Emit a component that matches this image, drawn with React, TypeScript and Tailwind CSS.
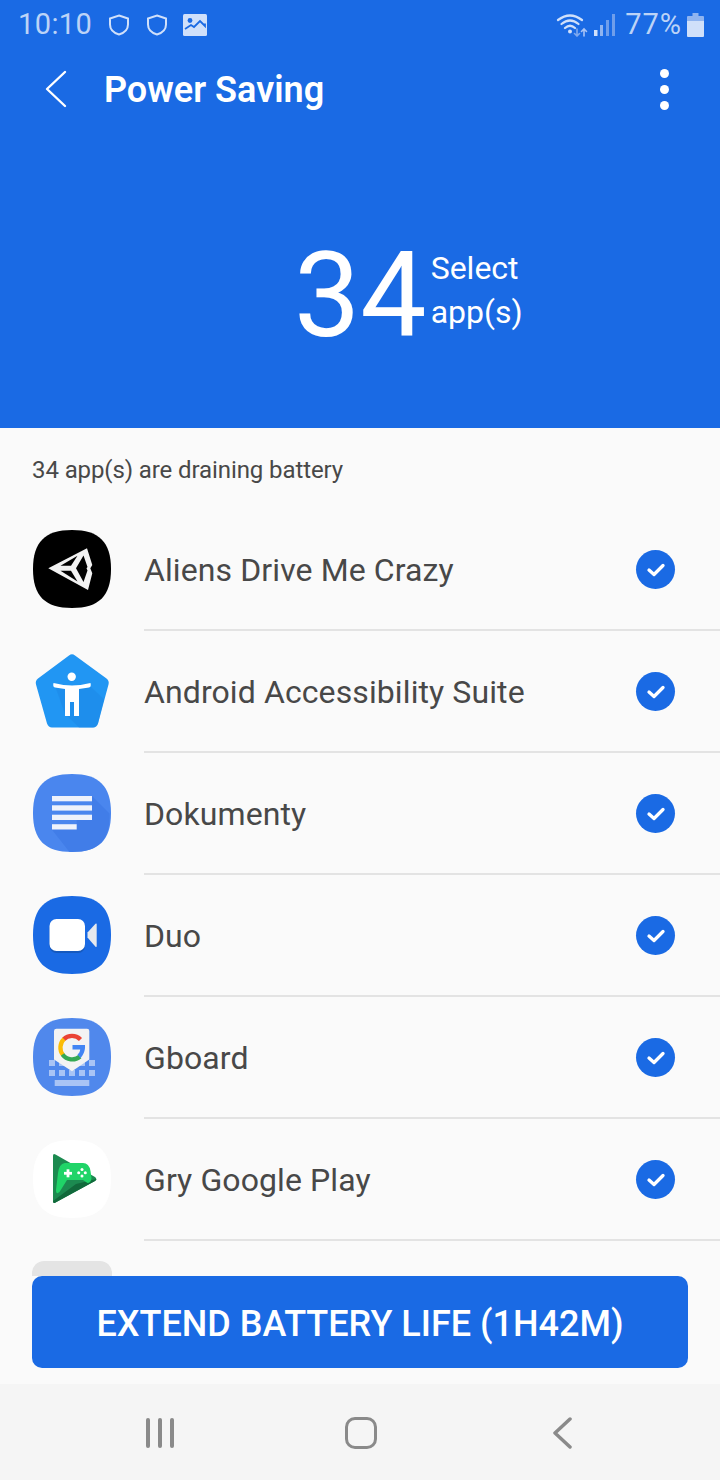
import { ReactNode } from 'react';

const SQUIRCLE = 'M39 0C66 0 78 12 78 39C78 66 66 78 39 78C12 78 0 66 0 39C0 12 12 0 39 0Z';

function Squircle({ fill, children }: { fill: string; children?: ReactNode }) {
  return (
    <svg width="78" height="78" viewBox="0 0 78 78">
      <path d={SQUIRCLE} fill={fill} />
      {children}
    </svg>
  );
}

function UnityIcon() {
  return (
    <Squircle fill="#000">
      <path d="M15.300 38.300L54 18.300L59.300 35L57.300 38.300L59.300 43.300L55 60L15.300 38.300Z" fill="#f2f2f2" />
      <g fill="#000">
        <path d="M27.500 35.800L44.500 25.800L38 35.800Z" />
        <path d="M27.500 40.800H38L44.500 51.500Z" />
        <path d="M43 38.300L50.500 25.500L54.500 37L53.500 38.300L54.500 40.500L50.500 52Z" />
      </g>
    </Squircle>
  );
}

function AccessibilityIcon() {
  return (
    <svg width="78" height="78" viewBox="0 0 78 78">
      <path d="M36 3.500Q39 1.200 42 3.500L73.500 26.500Q76.500 29 75.500 32.500L65 71.500Q63.500 75.500 60 75.500H19Q15.500 75.500 14 71.500L3 32.500Q2 29 5 26.500Z" fill="#2196f3" />
      <path d="M22 34H57L71 47L65 71.500Q63.500 75.500 60 75.500H46L32 62Z" fill="#1e88e5" opacity="0.55" />
      <circle cx="38.700" cy="24.700" r="4.200" fill="#fff" />
      <path d="M20.500 31Q19.500 35 22 35.500L32 37V64H37V50H41V64H46V37L56 35.500Q58.500 35 57.500 31Q47 33.500 39 33.500Q31 33.500 20.500 31Z" fill="#fff" />
    </svg>
  );
}

function DocsIcon() {
  return (
    <Squircle fill="#4a86ee">
      <path d="M59 22L76.500 39.500C77 66 66 78 39 78H36.500L19 55.700V50H43.700V46H59Z" fill="#3f7ae6" opacity="0.8" />
      <g fill="#eef2fb">
        <rect x="19" y="22" width="40" height="5.300" />
        <rect x="19" y="31.300" width="40" height="5.300" />
        <rect x="19" y="40.700" width="40" height="5.300" />
        <rect x="19" y="50.200" width="24.700" height="5.300" />
      </g>
    </Squircle>
  );
}

function DuoIcon() {
  return (
    <Squircle fill="#1a6ae4">
      <rect x="16.500" y="25" width="35.500" height="32" rx="7" fill="#124a9e" opacity="0.55" />
      <rect x="16.500" y="23" width="35.500" height="32" rx="7" fill="#fff" />
      <path d="M54.500 36.500L62.500 27.800Q63.700 27 63.700 28.500V50Q63.700 51.500 62.500 50.700L54.500 41.500Z" fill="#e6e9ee" />
    </Squircle>
  );
}

function GboardIcon() {
  return (
    <Squircle fill="#5088ec">
      <g fill="#a9c4f5">
        <rect x="16" y="42" width="6" height="6" />
        <rect x="26" y="42" width="6" height="6" />
        <rect x="46" y="42" width="6" height="6" />
        <rect x="56" y="42" width="6" height="6" />
        <rect x="16" y="52" width="6" height="6" />
        <rect x="26" y="52" width="6" height="6" />
        <rect x="36" y="52" width="6" height="6" />
        <rect x="46" y="52" width="6" height="6" />
        <rect x="56" y="52" width="6" height="6" />
        <rect x="21.700" y="62" width="34.600" height="6" />
      </g>
      <path d="M21 13Q21 10.700 23.500 10.700H54Q56.300 10.700 56.300 13V41.500L39 53.300L21 41.500Z" fill="#f3f3f3" />
      <path d="M47.500 21.500A12 12 0 0 0 30.500 21.500" fill="none" stroke="#ea4335" strokeWidth="4.300" />
      <path d="M31 21A12 12 0 0 0 30 37" fill="none" stroke="#fbbc05" strokeWidth="4.300" />
      <path d="M29.500 36.500A12 12 0 0 0 47 38.500" fill="none" stroke="#34a853" strokeWidth="4.300" />
      <path d="M39.500 27H52C52.500 33 50 37.500 47.500 40L44.500 36.500C46 35.500 47 33.500 47.200 31.500H39.500Z" fill="#4285f4" />
    </Squircle>
  );
}

function PlayGamesIcon() {
  return (
    <Squircle fill="#fff">
      <path d="M20 16Q20 13 22.500 14.500L62 37Q64.500 39 62 41L22.500 62.500Q20 64 20 61Z" fill="#1c8a50" />
      <path d="M20 61L43 44L63.500 39Q63.500 40 62 41L22.500 62.500Q20 64 20 61Z" fill="#11693b" />
      <path d="M31.700 23H50Q56 23 57.500 31L58.500 38Q58 43 54.500 43L50 40H34L26.500 52Q23 55 23 50L25 33Q26 24 31.700 23Z" fill="#20d468" />
      <g fill="#fff">
        <rect x="31" y="31.900" width="8" height="2.800" />
        <rect x="33.600" y="29.300" width="2.800" height="8" />
        <circle cx="49" cy="29.400" r="1.500" />
        <circle cx="49" cy="36" r="1.500" />
        <circle cx="45.700" cy="32.700" r="1.500" />
        <circle cx="52.300" cy="32.700" r="1.500" />
      </g>
    </Squircle>
  );
}

const apps = [
  { name: 'Aliens Drive Me Crazy', icon: <UnityIcon /> },
  { name: 'Android Accessibility Suite', icon: <AccessibilityIcon /> },
  { name: 'Dokumenty', icon: <DocsIcon /> },
  { name: 'Duo', icon: <DuoIcon /> },
  { name: 'Gboard', icon: <GboardIcon /> },
  { name: 'Gry Google Play', icon: <PlayGamesIcon /> },
];

function StatusBar() {
  return (
    <div className="h-12 flex items-center justify-between pl-[18px] pr-4 pt-[2px] text-[#bcd3f7] text-[29px] tracking-[0.4px]">
      <div className="flex items-center">
        <span>10:10</span>
        <svg className="ml-[16px]" width="22" height="24" viewBox="0 0 22 24" fill="none" stroke="#d0e0fa" strokeWidth="2">
          <path d="M11 2.500L20 5.500V11.500C20 16.500 16 20 11 21.500C6 20 2 16.500 2 11.500V5.500Z" />
        </svg>
        <svg className="ml-[16px]" width="22" height="24" viewBox="0 0 22 24" fill="none" stroke="#d0e0fa" strokeWidth="2">
          <path d="M11 2.500L20 5.500V11.500C20 16.500 16 20 11 21.500C6 20 2 16.500 2 11.500V5.500Z" />
        </svg>
        <svg className="ml-[15px]" width="24" height="22" viewBox="0 0 24 22">
          <rect width="24" height="22" rx="1.500" fill="#d0e0fa" />
          <circle cx="7" cy="6.500" r="2.400" fill="#1a6ae4" />
          <path d="M2 15L8 11L11 13L17 7L22 12V9.500" fill="none" stroke="#1a6ae4" strokeWidth="1.800" />
        </svg>
      </div>
      <div className="flex items-center">
        <svg width="32" height="24" viewBox="0 0 32 24" fill="none" strokeLinecap="round">
          <path d="M2 7Q14 -2 26 7M5.500 11Q14 4 22.500 11M9 15Q14 10.500 19 15" stroke="#d0e0fa" strokeWidth="2.200" />
          <circle cx="14" cy="18.500" r="2" fill="#d0e0fa" />
          <path d="M21 16V23M18.500 20.500L21 23L23.500 20.500" stroke="#7fa9ee" strokeWidth="1.600" />
          <path d="M28 23V16M25.500 18.500L28 16L30.500 18.500" stroke="#a9c4f5" strokeWidth="1.600" />
        </svg>
        <svg className="ml-[6px]" width="22" height="24" viewBox="0 0 22 24">
          <rect x="0" y="17" width="3.500" height="6" fill="#d0e0fa" />
          <rect x="6" y="12" width="3" height="11" fill="#8fb4f0" />
          <rect x="12" y="7" width="3" height="16" fill="#6f9eeb" />
          <rect x="18" y="1" width="3" height="22" fill="#6f9eeb" />
        </svg>
        <span className="ml-[9px] tracking-[1px]">77%</span>
        <svg className="ml-[5px]" width="17" height="24" viewBox="0 0 17 24">
          <path d="M5.500 0H11.500V3H5.500Z" fill="#8fb4f0" />
          <path d="M1 3H16Q17 3 17 4V8H0V4Q0 3 1 3Z" fill="#8fb4f0" />
          <path d="M0 8H17V23Q17 24 16 24H1Q0 24 0 23Z" fill="#d0e0fa" />
        </svg>
      </div>
    </div>
  );
}

export default function App() {
  return (
    <div className="relative w-[720px] h-[1480px] flex flex-col overflow-hidden bg-[#fafafa] font-['Roboto',sans-serif]">
      <div className="h-[428px] shrink-0 bg-[#1a6ae4] flex flex-col">
        <StatusBar />
        <div className="h-[82px] flex items-center justify-between pl-[44px] pr-[51px]">
          <div className="flex items-center">
            <svg width="24" height="38" viewBox="0 0 24 38" fill="none" stroke="#fff" strokeWidth="2.400" strokeLinecap="round" strokeLinejoin="round">
              <path d="M21 2L3 19L21 36" />
            </svg>
            <span className="ml-[36px] pt-[2px] text-[36px] font-semibold text-white leading-none">Power Saving</span>
          </div>
          <div className="flex flex-col gap-[7px]">
            <span className="w-[9px] h-[9px] rounded-full bg-white" />
            <span className="w-[9px] h-[9px] rounded-full bg-white" />
            <span className="w-[9px] h-[9px] rounded-full bg-white" />
          </div>
        </div>
        <div className="flex items-center pl-[294px] mt-[80px] text-white">
          <span className="text-[118px] leading-[148px] pt-[12px]">34</span>
          <div className="ml-[4px] text-[32px] leading-[44px]">
            <div>Select</div>
            <div>app(s)</div>
          </div>
        </div>
      </div>

      <div className="flex-1 min-h-0 overflow-hidden">
        <div className="pl-8 h-[81px] flex items-center text-[24px] text-[#484848] leading-none tracking-[-0.1px] pt-[3px]">34 app(s) are draining battery</div>
        {apps.map((app) => (
          <div key={app.name} className="h-[122px] flex">
            <div className="w-[144px] shrink-0 pl-[33px] pt-[21px]">{app.icon}</div>
            <div className="flex-1 flex items-center justify-between pr-[45px] border-b-2 border-[#e3e3e3] pt-[1px]">
              <span className="text-[32px] text-[#484848] leading-none tracking-[0.1px]">{app.name}</span>
              <div className="w-[39px] h-[39px] rounded-full bg-[#1a6ae4] flex items-center justify-center">
                <svg width="20" height="16" viewBox="0 0 20 16" fill="none" stroke="#fff" strokeWidth="3.300" strokeLinecap="round" strokeLinejoin="round">
                  <path d="M3 8L8 12.500L17 3.500" />
                </svg>
              </div>
            </div>
          </div>
        ))}
        <div className="ml-8 mt-5 w-[80px] h-[60px] rounded-t-xl bg-[#e4e4e4]" />
      </div>

      <div className="absolute left-0 right-0 top-[1276px] h-[108px] bg-[#fafafa]">
        <button className="ml-8 w-[656px] h-[92px] rounded-[10px] bg-[#1a6ae4] text-white text-[36px] font-medium leading-none pt-[3px]">
          EXTEND BATTERY LIFE (1H42M)
        </button>
      </div>

      <div className="h-[96px] shrink-0 bg-[#f5f5f5] flex items-center pl-[146px] pt-[2px]">
        <div className="flex gap-[8px]">
          <span className="w-1 h-[30px] rounded-full bg-[#8a8a8a]" />
          <span className="w-1 h-[30px] rounded-full bg-[#8a8a8a]" />
          <span className="w-1 h-[30px] rounded-full bg-[#8a8a8a]" />
        </div>
        <div className="ml-[171px] w-[32px] h-[32px] rounded-[10px] border-[3.500px] border-[#8a8a8a]" />
        <svg className="ml-[176px]" width="20" height="32" viewBox="0 0 20 32" fill="none" stroke="#8a8a8a" strokeWidth="3.500" strokeLinecap="round" strokeLinejoin="round">
          <path d="M17 2L2 16L17 30" />
        </svg>
      </div>
    </div>
  );
}
